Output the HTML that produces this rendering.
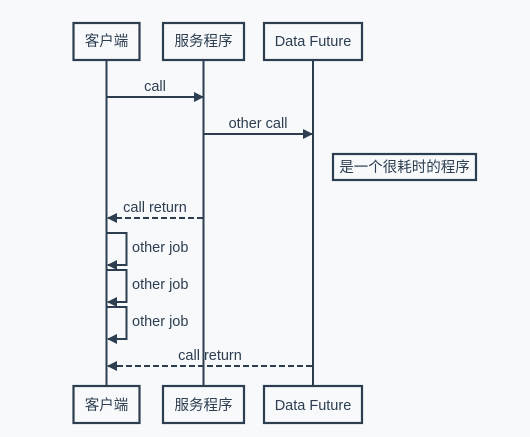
<!DOCTYPE html><html><head><meta charset="utf-8"><style>
body{margin:0;background:#f8f9fb;width:530px;height:432px;overflow:hidden}
svg text{font-family:"Liberation Sans","Noto Sans CJK SC",sans-serif;font-size:14.5px;fill:#2c3e50}
</style></head><body>
<svg width="530" height="432" xmlns="http://www.w3.org/2000/svg">
<defs><marker id="a" markerWidth="10" markerHeight="10" refX="9" refY="5" orient="auto" markerUnits="userSpaceOnUse"><path d="M0,0 L10,5 L0,10 z" fill="#2c3e50"/></marker></defs>
<g stroke="#2c3e50" fill="none">
<line x1="106.5" y1="60" x2="106.5" y2="386" stroke-width="2"/>
<line x1="203.5" y1="60" x2="203.5" y2="386" stroke-width="2"/>
<line x1="313" y1="60" x2="313" y2="386" stroke-width="2"/>
<g stroke-width="2.2" fill="#f8f9fb">
<rect x="73.5" y="23" width="66" height="37"/><rect x="163" y="23" width="81" height="37"/><rect x="264" y="23" width="98" height="37"/>
<rect x="73.5" y="386" width="66" height="37"/><rect x="163" y="386" width="81" height="37"/><rect x="264" y="386" width="98" height="37"/>
<rect x="333" y="154" width="143" height="26"/>
</g>
<g stroke-width="2">
<line x1="107" y1="97" x2="203" y2="97" marker-end="url(#a)"/>
<line x1="204" y1="134" x2="312" y2="134" marker-end="url(#a)"/>
<line x1="203" y1="218" x2="108" y2="218" stroke-dasharray="6,3" marker-end="url(#a)"/>
<line x1="312" y1="366" x2="108" y2="366" stroke-dasharray="6,3" marker-end="url(#a)"/>
<path d="M107,233 H126.5 V265 H108" marker-end="url(#a)"/>
<path d="M107,270 H126.5 V302 H108" marker-end="url(#a)"/>
<path d="M107,307 H126.5 V339 H108" marker-end="url(#a)"/>
</g></g>
<g text-anchor="middle">
<text x="106.5" y="46">客户端</text><text x="203.5" y="46">服务程序</text><text x="313" y="46">Data Future</text>
<text x="106.5" y="410">客户端</text><text x="203.5" y="410">服务程序</text><text x="313" y="410">Data Future</text>
<text x="155" y="91">call</text><text x="258" y="128">other call</text>
<text x="155" y="212">call return</text><text x="210" y="360">call return</text>
<text x="404.5" y="172">是一个很耗时的程序</text>
</g>
<text x="132" y="252">other job</text><text x="132" y="289">other job</text><text x="132" y="326">other job</text>
</svg></body></html>
